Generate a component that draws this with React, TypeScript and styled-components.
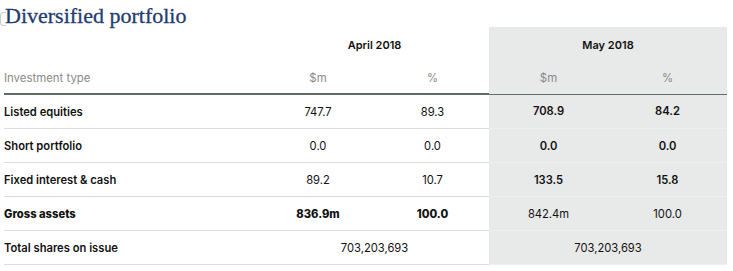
import React from 'react';
import styled, { createGlobalStyle } from 'styled-components';

const GlobalStyle = createGlobalStyle`
  body {
    margin: 0;
    background: #ffffff;
    font-family: Inter, 'Liberation Sans', sans-serif;
  }
`;

const Wrapper = styled.div`
  width: 733px;
  height: 271px;
  padding: 0 6px 0 4px;
  box-sizing: border-box;
  overflow: hidden;
`;

const TitleBar = styled.div`
  position: relative;
  height: 27px;
  display: flex;
  align-items: flex-start;
`;

const Mark = styled.span`
  position: absolute;
  left: -4px;
  top: 12px;
  width: 5px;
  height: 12px;
  border: 1px solid #c9c9c9;
  border-right: none;
  border-radius: 4px 0 0 4px;
`;

const Title = styled.h2`
  margin: 4px 0 0 1px;
  font-family: 'Liberation Serif', serif;
  font-weight: 400;
  font-size: 22px;
  line-height: 24px;
  color: #1f3c70;
  -webkit-text-stroke: 0.3px #1f3c70;
`;

const Table = styled.table`
  width: 723px;
  border-collapse: collapse;
  table-layout: fixed;
  font-size: 11.2px;
  color: #111;
`;

const Cell = styled.td<{ $shade?: boolean; $bold?: 'heavy' | 'semi' | 'normal'; $left?: boolean }>`
  height: 33px;
  padding: 0;
  text-align: ${(p) => (p.$left ? 'left' : 'center')};
  background: ${(p) => (p.$shade ? '#e8e9e9' : 'transparent')};
  border-bottom: 1px solid ${(p) => (p.$shade ? '#eeefef' : '#dcdcdc')};
  font-weight: ${(p) => (p.$bold === 'heavy' ? 800 : p.$bold === 'semi' ? 600 : 400)};
  white-space: nowrap;
`;

const GroupHead = styled.th<{ $shade?: boolean }>`
  height: 33px;
  padding: 1px 0 0;
  font-weight: 600;
  font-size: 11px;
  text-align: center;
  background: ${(p) => (p.$shade ? '#e8e9e9' : 'transparent')};
`;

const SubHead = styled.th<{ $shade?: boolean; $left?: boolean }>`
  height: 31px;
  padding: 1px 0 0;
  font-weight: 400;
  font-size: 11.4px;
  color: #8a8a8a;
  text-align: ${(p) => (p.$left ? 'left' : 'center')};
  background: ${(p) => (p.$shade ? '#e8e9e9' : 'transparent')};
  border-bottom: ${(p) => (p.$shade ? '1px' : '2px')} solid #5e7064;
`;

interface Row {
  label: string;
  april: [string, string];
  may: [string, string];
  labelWeight: 'heavy' | 'semi';
  aprilWeight: 'heavy' | 'semi' | 'normal';
  mayWeight: 'heavy' | 'semi' | 'normal';
}

const rows: Row[] = [
  { label: 'Listed equities', april: ['747.7', '89.3'], may: ['708.9', '84.2'], labelWeight: 'semi', aprilWeight: 'normal', mayWeight: 'semi' },
  { label: 'Short portfolio', april: ['0.0', '0.0'], may: ['0.0', '0.0'], labelWeight: 'semi', aprilWeight: 'normal', mayWeight: 'semi' },
  { label: 'Fixed interest & cash', april: ['89.2', '10.7'], may: ['133.5', '15.8'], labelWeight: 'semi', aprilWeight: 'normal', mayWeight: 'semi' },
  { label: 'Gross assets', april: ['836.9m', '100.0'], may: ['842.4m', '100.0'], labelWeight: 'heavy', aprilWeight: 'heavy', mayWeight: 'normal' },
];

export default function App() {
  return (
    <Wrapper>
      <GlobalStyle />
      <TitleBar>
        <Mark />
        <Title>Diversified portfolio</Title>
      </TitleBar>
      <Table>
        <colgroup>
          <col style={{ width: 256 }} />
          <col style={{ width: 116 }} />
          <col style={{ width: 113 }} />
          <col style={{ width: 119 }} />
          <col style={{ width: 119 }} />
        </colgroup>
        <thead>
          <tr>
            <GroupHead />
            <GroupHead colSpan={2}>April 2018</GroupHead>
            <GroupHead colSpan={2} $shade>
              May 2018
            </GroupHead>
          </tr>
          <tr>
            <SubHead $left>Investment type</SubHead>
            <SubHead>$m</SubHead>
            <SubHead>%</SubHead>
            <SubHead $shade>$m</SubHead>
            <SubHead $shade>%</SubHead>
          </tr>
        </thead>
        <tbody>
          {rows.map((r) => (
            <tr key={r.label}>
              <Cell $left $bold={r.labelWeight}>
                {r.label}
              </Cell>
              <Cell $bold={r.aprilWeight}>{r.april[0]}</Cell>
              <Cell $bold={r.aprilWeight}>{r.april[1]}</Cell>
              <Cell $shade $bold={r.mayWeight}>
                {r.may[0]}
              </Cell>
              <Cell $shade $bold={r.mayWeight}>
                {r.may[1]}
              </Cell>
            </tr>
          ))}
          <tr>
            <Cell $left $bold="semi">
              Total shares on issue
            </Cell>
            <Cell colSpan={2}>703,203,693</Cell>
            <Cell colSpan={2} $shade $bold="normal">
              703,203,693
            </Cell>
          </tr>
        </tbody>
      </Table>
    </Wrapper>
  );
}
